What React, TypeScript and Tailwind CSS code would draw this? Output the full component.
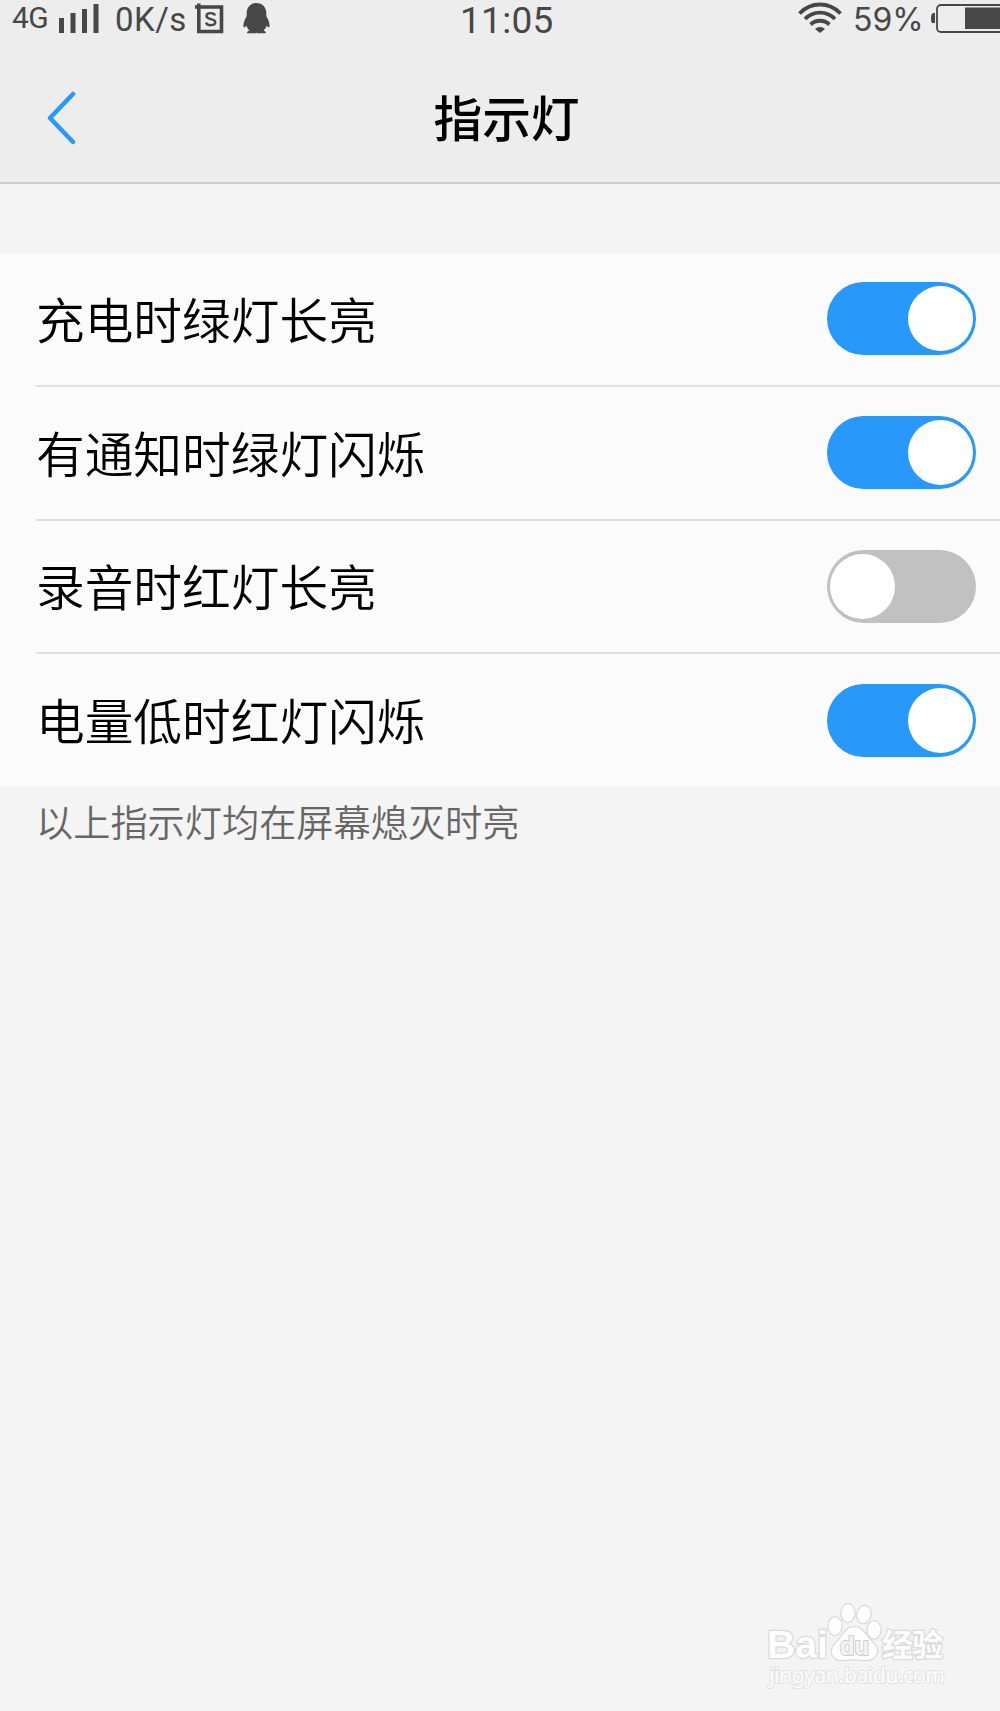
import { useState } from 'react';

interface LightOption {
  id: string;
  label: string;
  enabled: boolean;
  rowClass: string;
}

const initialOptions: LightOption[] = [
  { id: 'charging', label: '充电时绿灯长亮', enabled: true, rowClass: 'h-[134px] border-b-2 pb-px' },
  { id: 'notification', label: '有通知时绿灯闪烁', enabled: true, rowClass: 'h-[134px] border-b-2 pb-px' },
  { id: 'recording', label: '录音时红灯长亮', enabled: false, rowClass: 'h-[133px] border-b-2 pb-px' },
  { id: 'battery', label: '电量低时红灯闪烁', enabled: true, rowClass: 'h-[132px]' },
];

// Status bar: signal, network speed, clock, battery
function StatusBar() {
  return (
    <div className="flex h-11 items-start whitespace-nowrap font-['Roboto','Liberation_Sans',sans-serif] text-[#474747]">
      <span className="ml-3 w-[46px] text-[30px] leading-[36px] tracking-[-0.5px]">4G</span>
      <svg className="mt-1 h-[29px] w-[42px]" viewBox="0 0 42 29" fill="currentColor">
        <rect x="1" y="14" width="5" height="15" />
        <rect x="12.5" y="9" width="5" height="20" />
        <rect x="24" y="5" width="5" height="24" />
        <rect x="35.5" y="0" width="5" height="29" />
      </svg>
      <span className="ml-[15px] w-[80px] text-[33px] leading-[39px] tracking-[0.5px]">0K/s</span>
      <svg className="mt-[3px] h-[31px] w-[29px]" viewBox="0 0 29 31" fill="none" stroke="currentColor">
        <path d="M3.8 0.5V28.5H26.5V4H0" strokeWidth="3.6" />
        <path d="M20 12.5C19 9.2 11.5 9.2 11.5 13C11.5 17.3 20.3 14.8 20.3 19.2C20.3 23 12 23.2 11 19.6" strokeWidth="2.4" />
      </svg>
      <svg className="ml-[19px] mt-[3px] h-[31px] w-[27px]" viewBox="0 0 27 31" fill="currentColor">
        <path d="M13.5 0C8 0 3.7 4 3.7 10V13C2 16 0 20 0.5 23.5C1 25.5 2.5 24 3.2 22.5C4 24.5 5 26 6.5 27.8C4.5 28.2 4 29.2 4.2 30.3H13L13.5 29.5L14 30.3H22.8C23 29.2 22.5 28.2 20.5 27.8C22 26 23 24.5 23.8 22.5C24.5 24 26 25.5 26.5 23.5C27 20 25 16 23.3 13V10C23.3 4 19 0 13.5 0Z" />
      </svg>
      <span className="ml-[190px] w-[99px] text-[37px] leading-[41px] tracking-[0.3px]">11:05</span>
      <svg className="ml-[239px] mt-[2px] h-[31px] w-[44px]" viewBox="0 0 44 31" fill="none" stroke="currentColor" strokeWidth="3.8">
        <path d="M1.5 11.5C13 -0.5 31 -0.5 42.5 11.5" />
        <path d="M7 17C15.5 8.5 28.5 8.5 37 17" />
        <path d="M12.5 22.5C18 17.5 26 17.5 31.5 22.5" />
        <path d="M17 27C19.5 24.2 24.5 24.2 27 27L22 31Z" fill="currentColor" stroke="none" />
      </svg>
      <span className="ml-[11px] w-[78px] font-['Inter','Roboto',sans-serif] text-[32px] leading-[39px]">59%</span>
      <svg className="mt-1 h-[29px] w-[69px] shrink-0" viewBox="0 0 69 29" fill="none" stroke="currentColor">
        <path d="M4 9H2.5Q0 9 0 14.5T2.5 19H4Z" fill="currentColor" stroke="none" />
        <rect x="6" y="1" width="80" height="27" rx="4" strokeWidth="1.8" />
        <rect x="34" y="3.5" width="40" height="21.5" fill="currentColor" stroke="none" />
      </svg>
    </div>
  );
}

function Toggle({ enabled, onToggle, label }: { enabled: boolean; onToggle: () => void; label: string }) {
  return (
    <button
      type="button"
      role="switch"
      aria-checked={enabled}
      aria-label={label}
      onClick={onToggle}
      className={`flex h-[73px] w-[149px] items-center rounded-full px-[3px] ${
        enabled ? 'justify-end bg-[#2898fb]' : 'justify-start bg-[#c1c1c1]'
      }`}
    >
      <span className="size-[65px] rounded-full bg-white" />
    </button>
  );
}

// Baidu Jingyan mark in the lower right corner
function Watermark() {
  return (
    <svg
      className="absolute left-[760px] top-[1598px] h-[100px] w-[200px]"
      viewBox="0 0 200 100"
      fill="#fdfdfd"
      stroke="#dadada"
      strokeWidth="2.5"
      style={{ paintOrder: 'stroke' }}
    >
      <text x="7" y="60" fontSize="39" fontWeight="700" textLength="61" lengthAdjust="spacingAndGlyphs" className="font-['Liberation_Sans',sans-serif]">Bai</text>
      <ellipse cx="75" cy="28" rx="6.5" ry="8.8" />
      <ellipse cx="88" cy="15" rx="6.5" ry="9" />
      <ellipse cx="104" cy="16.5" rx="6.5" ry="8.8" transform="rotate(12 104 16.5)" />
      <ellipse cx="114" cy="32" rx="6.5" ry="8.5" />
      <path d="M94 29C86 29 83 38 76 45C68 53 73 63 83 62C90 61 97 61 104 62C115 63 121 54 114 46C107 40 103 29 94 29Z" />
      <text x="80" y="57" fontSize="25" fontWeight="700" fill="#f4f4f4" stroke="#cccccc" strokeWidth="2" textLength="29" lengthAdjust="spacingAndGlyphs" className="font-['Liberation_Sans',sans-serif]">du</text>
      <text x="122" y="58" fontSize="31" fontWeight="700" textLength="61" className="font-['Noto_Sans_CJK_SC',sans-serif]">经验</text>
      <text x="9" y="85" fontSize="21" stroke="#e2e2e2" strokeWidth="2" textLength="176" className="font-['Noto_Sans',sans-serif]">jingyan.baidu.com</text>
    </svg>
  );
}

export default function App() {
  const [options, setOptions] = useState(initialOptions);

  const handleToggle = (id: string) => {
    setOptions(options.map((o) => (o.id === id ? { ...o, enabled: !o.enabled } : o)));
  };

  return (
    <div className="relative h-[1711px] w-[1000px] overflow-hidden bg-[#f4f4f4] font-['Noto_Sans_CJK_SC',sans-serif] text-black">
      <header className="h-[184px] border-b-2 border-[#cbcbcb] bg-[#ededed]">
        <StatusBar />
        <div className="grid h-[138px] grid-cols-[200px_1fr_200px] items-center">
          <button type="button" aria-label="返回" className="pl-[46px]">
            <svg className="mb-[-10px] h-[54px] w-[30px]" viewBox="0 0 30 54" fill="none" stroke="#2898fb" strokeWidth="4.5" strokeLinecap="round" strokeLinejoin="round">
              <path d="M27 3L4 27L27 51" />
            </svg>
          </button>
          <h1 className="pl-[13px] pt-[6px] text-center text-[48.7px] font-medium leading-[60px]">指示灯</h1>
        </div>
      </header>

      {/* Lista de opções */}
      <section className="mt-[69px] bg-[#fbfbfb] pl-9">
        {options.map((option) => (
          <div key={option.id} className={`flex items-center justify-between border-[#dfdfdf] pr-6 ${option.rowClass}`}>
            <span className="pb-[2px] text-[48.7px] font-[350] leading-[60px]">{option.label}</span>
            <Toggle enabled={option.enabled} label={option.label} onToggle={() => handleToggle(option.id)} />
          </div>
        ))}
      </section>
      <p className="pl-9 pt-[8px] text-[37.2px] font-[350] leading-[54px] text-[#666666]">以上指示灯均在屏幕熄灭时亮</p>

      <Watermark />
    </div>
  );
}
